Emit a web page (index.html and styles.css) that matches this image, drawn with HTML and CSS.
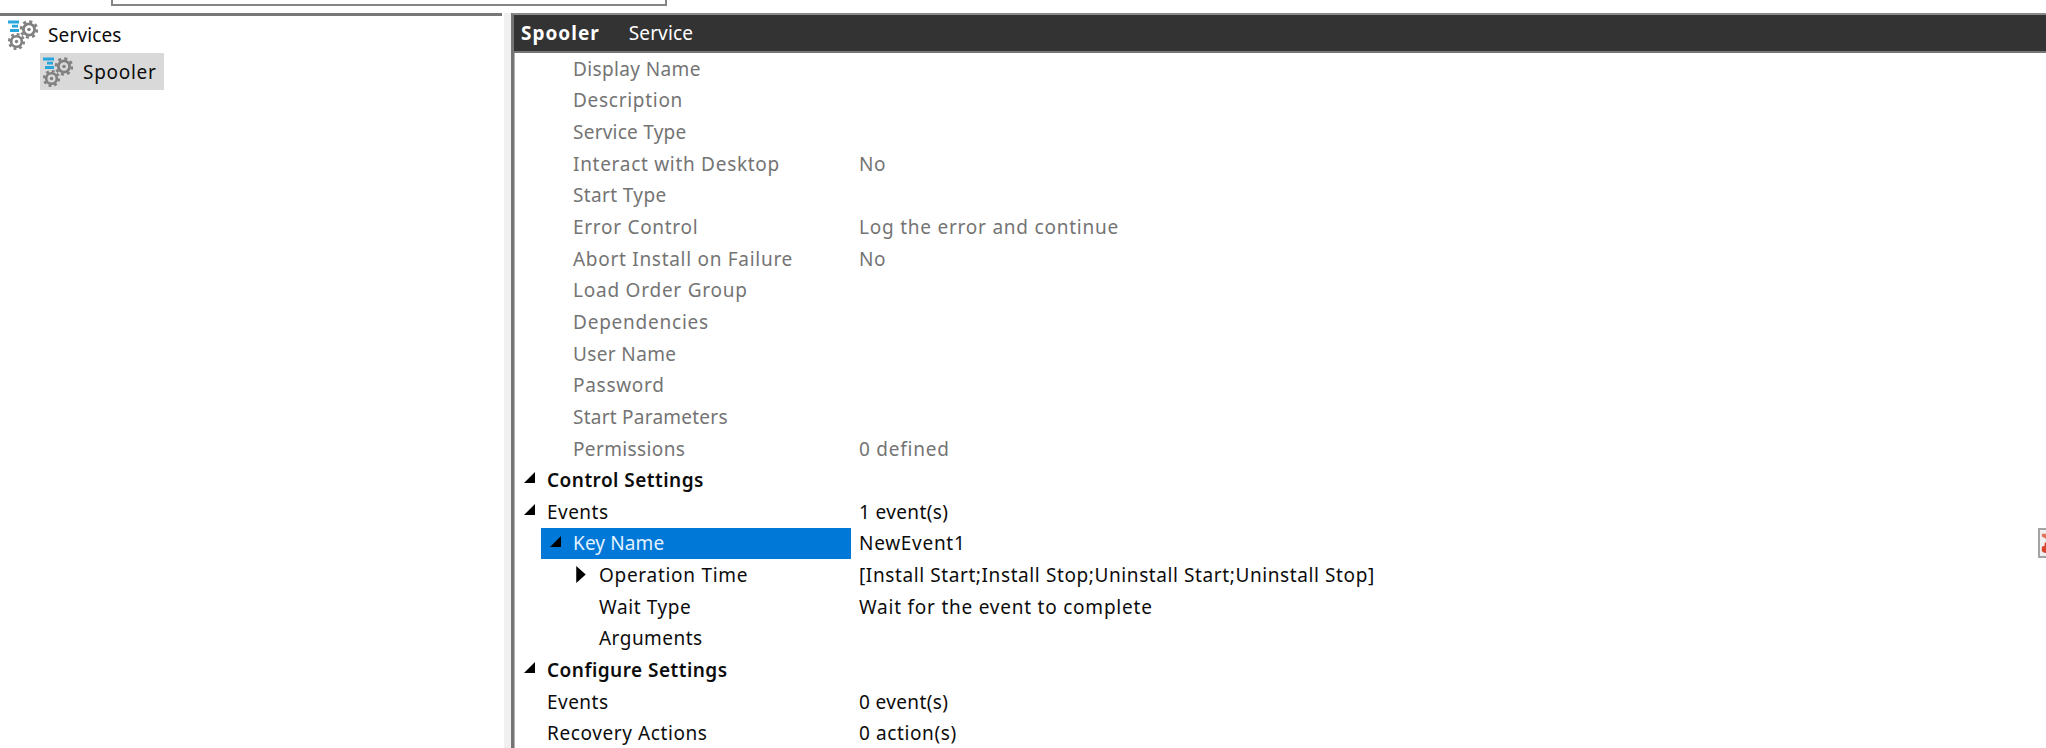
FILE: index.html
```html
<!DOCTYPE html>
<html lang="en">
<head>
<meta charset="utf-8">
<title>Services</title>
<link rel="stylesheet" href="styles.css">
</head>
<body>
<svg class="defs" aria-hidden="true">
  <symbol id="services" viewBox="0 0 30 30">
    <g fill="none" stroke="#27a5dd" stroke-width="2.8"><path d="M0 2H11M4 6.2H10M2 10.5H11"/></g>
    <g fill="none" stroke="#808080">
      <circle cx="21" cy="9.5" r="5.6" stroke-width="2.8"/>
      <circle cx="21" cy="9.5" r="8" stroke-width="2.6" stroke-dasharray="3.1 3.18"/>
      <circle cx="8.5" cy="21.5" r="5.3" stroke-width="2.6"/>
      <circle cx="8.5" cy="21.5" r="7.4" stroke-width="2.4" stroke-dasharray="2.9 2.91"/>
    </g>
    <circle cx="21" cy="9.5" r="1.8" fill="#808080"/>
    <circle cx="8.5" cy="21.5" r="1.7" fill="#808080"/>
  </symbol>
  <symbol id="open" viewBox="0 0 12 12"><path d="M12 0V12H0Z"/></symbol>
  <symbol id="closed" viewBox="0 0 10 18"><path d="M0 0L10 9L0 18Z"/></symbol>
</svg>
<div class="app">
  <div class="topbar"><div class="field"></div></div>
  <div class="panes">
    <nav class="tree">
      <div class="node"><svg class="gear"><use href="#services"/></svg><span class="t1">Services</span></div>
      <div class="node child"><svg class="gear"><use href="#services"/></svg><span class="t7">Spooler</span></div>
    </nav>
    <div class="splitter"></div>
    <main class="details">
      <header class="head"><b class="t9">Spooler</b><span class="t1">Service</span></header>
      <div class="grid">
        <div class="row dim"><div class="key l1"><span class="t3">Display Name</span></div></div>
        <div class="row dim"><div class="key l1"><span class="t7">Description</span></div></div>
        <div class="row dim"><div class="key l1"><span class="t2">Service Type</span></div></div>
        <div class="row dim"><div class="key l1"><span class="t7">Interact with Desktop</span></div><span class="t6">No</span></div>
        <div class="row dim"><div class="key l1"><span class="t3">Start Type</span></div></div>
        <div class="row dim"><div class="key l1"><span class="t7">Error Control</span></div><span class="t8">Log the error and continue</span></div>
        <div class="row dim"><div class="key l1"><span class="t7">Abort Install on Failure</span></div><span class="t6">No</span></div>
        <div class="row dim"><div class="key l1"><span class="t8">Load Order Group</span></div></div>
        <div class="row dim"><div class="key l1"><span class="t8">Dependencies</span></div></div>
        <div class="row dim"><div class="key l1"><span class="t3">User Name</span></div></div>
        <div class="row dim"><div class="key l1"><span class="t7">Password</span></div></div>
        <div class="row dim"><div class="key l1"><span class="t2">Start Parameters</span></div></div>
        <div class="row dim"><div class="key l1"><span class="t3">Permissions</span></div><span class="t8">0 defined</span></div>
        <div class="row bold"><div class="key"><svg class="open"><use href="#open"/></svg><span class="t4">Control Settings</span></div></div>
        <div class="row"><div class="key"><svg class="open"><use href="#open"/></svg><span class="t4">Events</span></div><span class="t3">1 event(s)</span></div>
        <div class="row"><div class="key l1 selected"><svg class="open"><use href="#open"/></svg><span class="t1">Key Name</span></div><span class="value t7">NewEvent1</span><button class="remove" aria-label="Remove"><svg viewBox="0 0 20 24"><path d="M0 2H6L14 9L17 18L4 7L0 5Z" fill="#e0745c"/><path d="M17 2L20 5L9 21Q4 25 0 21V16L3 15V12L7 10Z" fill="#d9432b"/></svg></button></div>
        <div class="row"><div class="key l2"><svg class="closed"><use href="#closed"/></svg><span class="t7">Operation Time</span></div><span class="t6">[Install Start;Install Stop;Uninstall Start;Uninstall Stop]</span></div>
        <div class="row"><div class="key l2"><span class="t6">Wait Type</span></div><span class="t8">Wait for the event to complete</span></div>
        <div class="row"><div class="key l2"><span class="t4">Arguments</span></div></div>
        <div class="row bold"><div class="key"><svg class="open"><use href="#open"/></svg><span class="t4">Configure Settings</span></div></div>
        <div class="row"><div class="key"><span class="t4">Events</span></div><span class="t3">0 event(s)</span></div>
        <div class="row"><div class="key"><span class="t6">Recovery Actions</span></div><span class="t6">0 action(s)</span></div>
      </div>
    </main>
  </div>
</div>
</body>
</html>
```
FILE: styles.css
```css
* { box-sizing: border-box; }
body { margin: 0; background: #fff; color: #0c0c0c; font: 19px/32px "Noto Sans", "Open Sans", sans-serif; overflow: hidden; }
.defs { position: absolute; width: 0; height: 0; }
.app { display: flex; flex-direction: column; width: 2046px; height: 748px; overflow: hidden; }
.topbar { flex: none; height: 13px; padding-left: 111px; }
.field { width: 556px; height: 6px; border: 2px solid #858585; border-top: 0; }
.panes { display: flex; flex: 1; min-height: 0; }
.tree { width: 502px; border-top: 3px solid #777; padding: 0 0 0 6px; }
.node { display: flex; align-items: center; gap: 10px; width: max-content; height: 37px; padding-left: 2px; padding-right: 7px; line-height: 33px; white-space: nowrap; }
.node span { padding-top: 1px; }
.child { width: 124px; margin-left: 34px; padding-left: 3px; background: #d9d9d9; }
.gear { flex: none; width: 30px; height: 30px; }
.splitter { width: 9px; background: #f0f0f0; border-left: 2px solid #fff; }
.details { flex: 1; border-left: 3px solid #747474; border-top: 2px solid #8a8a8a; }
.head { display: flex; gap: 29px; height: 38px; padding-left: 7px; line-height: 36px; background: #333; color: #fff; border-bottom: 2px solid #777; }
.grid { display: flex; flex-direction: column; border-left: 1px solid #b4b4b4; padding-left: 26px; }
.row { display: flex; align-items: center; flex: none; height: 31.65px; white-space: nowrap; }
.key { position: relative; display: flex; align-items: center; width: 310px; height: 100%; margin-right: 8px; padding-left: 6px; }
.key.l1 { padding-left: 32px; }
.key.l2 { padding-left: 58px; }
.dim { color: #747474; }
.bold { font-weight: 600; }
.open { position: absolute; width: 11px; height: 11px; left: -17px; top: 8px; }
.closed { position: absolute; width: 10px; height: 17px; left: 35px; top: 7px; }
.selected { color: #e4f1ff; background: #0078d7; }
.selected .open { left: 9px; color: #000; }
.value { flex: 1; }
.remove { display: flex; width: 40px; height: 30px; margin-right: -32px; padding: 2px 1px; border: 2px solid #a4a4a4; background: #f0f0f0; }
.remove svg { flex: none; width: 20px; height: 22px; }

/* Label tracking */
.t1 { letter-spacing: .13px; }
.t2 { letter-spacing: .24px; }
.t3 { letter-spacing: .37px; }
.t4 { letter-spacing: .47px; }
.t6 { letter-spacing: .6px; }
.t7 { letter-spacing: .71px; }
.t8 { letter-spacing: .77px; }
.t9 { letter-spacing: 1px; }
```
